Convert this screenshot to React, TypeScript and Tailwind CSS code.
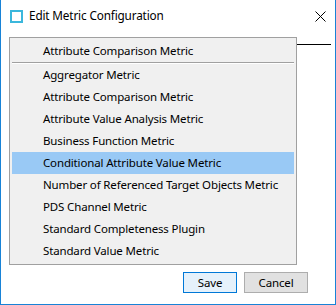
import React from 'react';

const metrics = [
  'Aggregator Metric',
  'Attribute Comparison Metric',
  'Attribute Value Analysis Metric',
  'Business Function Metric',
  'Conditional Attribute Value Metric',
  'Number of Referenced Target Objects Metric',
  'PDS Channel Metric',
  'Standard Completeness Plugin',
  'Standard Value Metric',
];

const selected = 'Conditional Attribute Value Metric';

export default function App() {
  return (
    <div className="w-[336px] h-[305px] bg-white border-x border-b border-[#1883d7] flex flex-col font-['Noto_Sans',sans-serif] text-[11.5px] tracking-[-0.15px] text-black overflow-hidden whitespace-nowrap">
      {/* title bar */}
      <div className="h-[32px] flex items-center pl-[9px] pr-[9px]">
        <div className="w-[13px] h-[13px] border-2 border-[#3bb7dc]" />
        <span className="ml-[6px] leading-none text-[11.75px]">Edit Metric Configuration</span>
        <div className="flex-1" />
        <svg width="11" height="11" viewBox="0 0 11 11" className="block">
          <path d="M0.5 0.5 L10.5 10.5 M10.5 0.5 L0.5 10.5" stroke="#000" strokeWidth="1" />
        </svg>
      </div>

      {/* open dropdown over the combo */}
      <div className="mt-[5px] flex items-start pl-[8px]">
        <div className="w-[288px] h-[228px] bg-[#f0f0f0] border border-[#a0a0a0] px-[2px] pt-[2px]">
          <div className="h-[22px] flex items-center pl-[31px]">Attribute Comparison Metric</div>
          <div className="h-px bg-[#a0a0a0]" />
          <div className="h-px bg-white" />
          {metrics.map((m) => (
            <div
              key={m}
              className={`h-[22px] flex items-center pl-[31px] ${m === selected ? 'bg-[#99c9f5]' : ''}`}
            >
              {m}
            </div>
          ))}
        </div>
        <div className="mt-[7px] w-[34px] h-px bg-black" />
      </div>

      {/* buttons */}
      <div className="mt-[7px] flex justify-end gap-[7px] pr-[27px]">
        <button className="w-[54px] h-[21px] bg-[#e5f1fb] border border-[#0078d7] leading-none">Save</button>
        <button className="w-[64px] h-[21px] bg-[#e1e1e1] border border-[#adadad] leading-none">Cancel</button>
      </div>
    </div>
  );
}
